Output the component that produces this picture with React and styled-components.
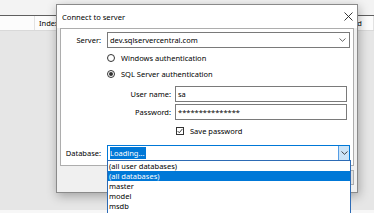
import React from 'react';
import styled, { createGlobalStyle } from 'styled-components';

const GlobalStyle = createGlobalStyle`
  html, body {
    margin: 0;
    padding: 0;
  }
  body {
    width: 374px;
    height: 213px;
    overflow: hidden;
    font-family: "Noto Sans", "Open Sans", sans-serif;
    font-size: 7.5px;
    color: #000;
  }
`;

const Screen = styled.div`
  position: relative;
  width: 374px;
  height: 213px;
  overflow: hidden;
  display: flex;
  flex-direction: column;
  background: #e6e6e6;
`;

const TopStrip = styled.div`
  height: 15px;
  flex: none;
  background: #f3f3f3;
  border-bottom: 1px solid #5f5f5f;
`;

const HeaderRow = styled.div`
  height: 14px;
  flex: none;
  display: flex;
  background: #fcfcfc;
  border-bottom: 1px solid #d9d9d9;
`;

const HeaderCell = styled.div`
  box-sizing: border-box;
  width: ${(p) => p.$w}px;
  flex: none;
  padding-left: 4px;
  line-height: 14px;
  white-space: nowrap;
  overflow: hidden;
  border-right: 1px solid #e2e2e2;
`;

const GridArea = styled.div`
  flex: 1;
  background: #e6e6e6;
`;

const BottomStrip = styled.div`
  height: 3px;
  flex: none;
  background: #f7f7f7;
`;

const Dialog = styled.div`
  position: absolute;
  left: 56px;
  top: 4px;
  width: 302px;
  height: 189px;
  box-sizing: border-box;
  border: 1px solid #8a8a8a;
  background: #f0f0f0;
  box-shadow: 1px 3px 10px rgba(0, 0, 0, 0.3);
  display: flex;
  flex-direction: column;
`;

const TitleBar = styled.div`
  height: 23px;
  flex: none;
  display: flex;
  align-items: center;
  justify-content: space-between;
  padding: 0 4px 0 5px;
  background: #fff;
  font-size: 7.6px;
`;

const CloseIcon = styled.svg`
  width: 9px;
  height: 9px;
  display: block;
`;

const Body = styled.div`
  flex: 1;
  padding: 0 3px;
  display: flex;
  flex-direction: column;
`;

const Panel = styled.div`
  height: 138px;
  box-sizing: border-box;
  border: 1px solid #adadad;
  background: #fff;
  padding: 3px 3px 4px 0;
  display: flex;
  flex-direction: column;
`;

const Row = styled.div`
  display: flex;
  align-items: center;
  height: ${(p) => p.$h || 16}px;
  margin-top: ${(p) => p.$mt || 0}px;
  gap: 6px;
`;

const Label = styled.div`
  width: ${(p) => p.$w || 40}px;
  flex: none;
  text-align: right;
  white-space: nowrap;
`;

const Field = styled.div`
  flex: 1;
  display: flex;
  align-items: center;
  height: 100%;
  gap: 4px;
  margin-left: ${(p) => p.$ml || 0}px;
  margin-right: ${(p) => p.$mr || 0}px;
`;

const TextBox = styled.div`
  position: relative;
  flex: 1;
  height: 100%;
  box-sizing: border-box;
  border: 1px solid ${(p) => (p.$focus ? '#0078d7' : '#7a7a7a')};
  background: #fff;
  padding-left: 2px;
  line-height: 14px;
  white-space: nowrap;
  display: flex;
  align-items: center;
`;

const Chevron = styled.svg`
  position: absolute;
  right: 3px;
  top: 5px;
  width: 7px;
  height: 4px;
`;

const DropButton = styled.div`
  position: absolute;
  right: 0;
  top: 0;
  bottom: 0;
  width: 10px;
  background: #cce4f7;
  border-left: 1px solid #569de5;
  display: flex;
  align-items: center;
  justify-content: center;
`;

const Selected = styled.span`
  background: #0078d7;
  color: #fff;
  line-height: 12px;
  padding-right: 1px;
`;

const Mark = styled.span`
  width: 8px;
  height: 8px;
  flex: none;
  box-sizing: border-box;
  border: 1px solid #333;
  border-radius: ${(p) => (p.$round ? '50%' : '0')};
  background: #fff;
  display: flex;
  align-items: center;
  justify-content: center;
  margin-right: 2px;
`;

const Dot = styled.span`
  width: 4px;
  height: 4px;
  border-radius: 50%;
  background: #333;
`;

const DropList = styled.div`
  position: absolute;
  left: 0;
  right: -1px;
  top: calc(100% - 1px);
  height: 60px;
  box-sizing: border-box;
  border: 1px solid #2d6bb5;
  background: #fff;
  z-index: 5;
`;

const ListItem = styled.div`
  height: 10px;
  line-height: 10px;
  padding-left: 1px;
  white-space: nowrap;
  background: ${(p) => (p.$active ? '#0078d7' : 'transparent')};
  color: ${(p) => (p.$active ? '#fff' : '#000')};
`;

const ButtonBar = styled.div`
  display: flex;
  justify-content: flex-end;
  gap: 6px;
  padding-top: 4px;
`;

const Button = styled.div`
  width: 50px;
  height: 15px;
  box-sizing: border-box;
  border: 1px solid #adadad;
  background: #e1e1e1;
  text-align: center;
  line-height: 13px;
`;

const ComboRel = styled.div`
  position: relative;
  flex: 1;
  height: 100%;
  display: flex;
`;

const databases = ['(all user databases)', '(all databases)', 'master', 'model', 'msdb', 'tempdb'];

const ChevronDown = () => (
  <Chevron viewBox="0 0 7 4">
    <path d="M0.5 0.5 L3.5 3.3 L6.5 0.5" fill="none" stroke="#555" strokeWidth="0.9" />
  </Chevron>
);

const App = () => (
  <>
    <GlobalStyle />
    <Screen>
      <TopStrip />
      <HeaderRow>
        <HeaderCell $w={35} />
        <HeaderCell $w={305}>Index</HeaderCell>
        <HeaderCell $w={34}>Used</HeaderCell>
      </HeaderRow>
      <GridArea />
      <BottomStrip />

      <Dialog>
        <TitleBar>
          <span>Connect to server</span>
          <CloseIcon viewBox="0 0 9 9">
            <path d="M0.5 0.5 L8.5 8.5 M8.5 0.5 L0.5 8.5" stroke="#222" strokeWidth="0.9" />
          </CloseIcon>
        </TitleBar>
        <Body>
          <Panel>
            <Row>
              <Label>Server:</Label>
              <Field>
                <TextBox>
                  dev.sqlservercentral.com
                  <ChevronDown />
                </TextBox>
              </Field>
            </Row>
            <Row $h={12} $mt={4}>
              <Label />
              <Field>
                <Mark $round />
                Windows authentication
              </Field>
            </Row>
            <Row $h={12} $mt={4}>
              <Label />
              <Field>
                <Mark $round>
                  <Dot />
                </Mark>
                SQL Server authentication
              </Field>
            </Row>
            <Row $mt={6}>
              <Label />
              <Field $mr={3}>
                <Label $w={64}>User name:</Label>
                <TextBox>sa</TextBox>
              </Field>
            </Row>
            <Row $mt={2}>
              <Label />
              <Field $mr={3}>
                <Label $w={64}>Password:</Label>
                <TextBox>***************</TextBox>
              </Field>
            </Row>
            <Row $h={12} $mt={5}>
              <Label />
              <Field $ml={69}>
                <Mark>
                  <svg width="6" height="6" viewBox="0 0 6 6">
                    <path d="M0.6 3 L2.3 4.8 L5.4 0.9" fill="none" stroke="#333" strokeWidth="0.9" />
                  </svg>
                </Mark>
                Save password
              </Field>
            </Row>
            <Row $mt={8}>
              <Label>Database:</Label>
              <Field>
                <ComboRel>
                  <TextBox $focus>
                    <Selected>Loading...</Selected>
                    <DropButton>
                      <svg width="7" height="4" viewBox="0 0 7 4">
                        <path d="M0.5 0.5 L3.5 3.3 L6.5 0.5" fill="none" stroke="#333" strokeWidth="0.9" />
                      </svg>
                    </DropButton>
                  </TextBox>
                  <DropList>
                    {databases.map((db) => (
                      <ListItem key={db} $active={db === '(all databases)'}>
                        {db}
                      </ListItem>
                    ))}
                  </DropList>
                </ComboRel>
              </Field>
            </Row>
          </Panel>
          <ButtonBar>
            <Button>Connect</Button>
            <Button>Cancel</Button>
          </ButtonBar>
        </Body>
      </Dialog>
    </Screen>
  </>
);

export default App;
